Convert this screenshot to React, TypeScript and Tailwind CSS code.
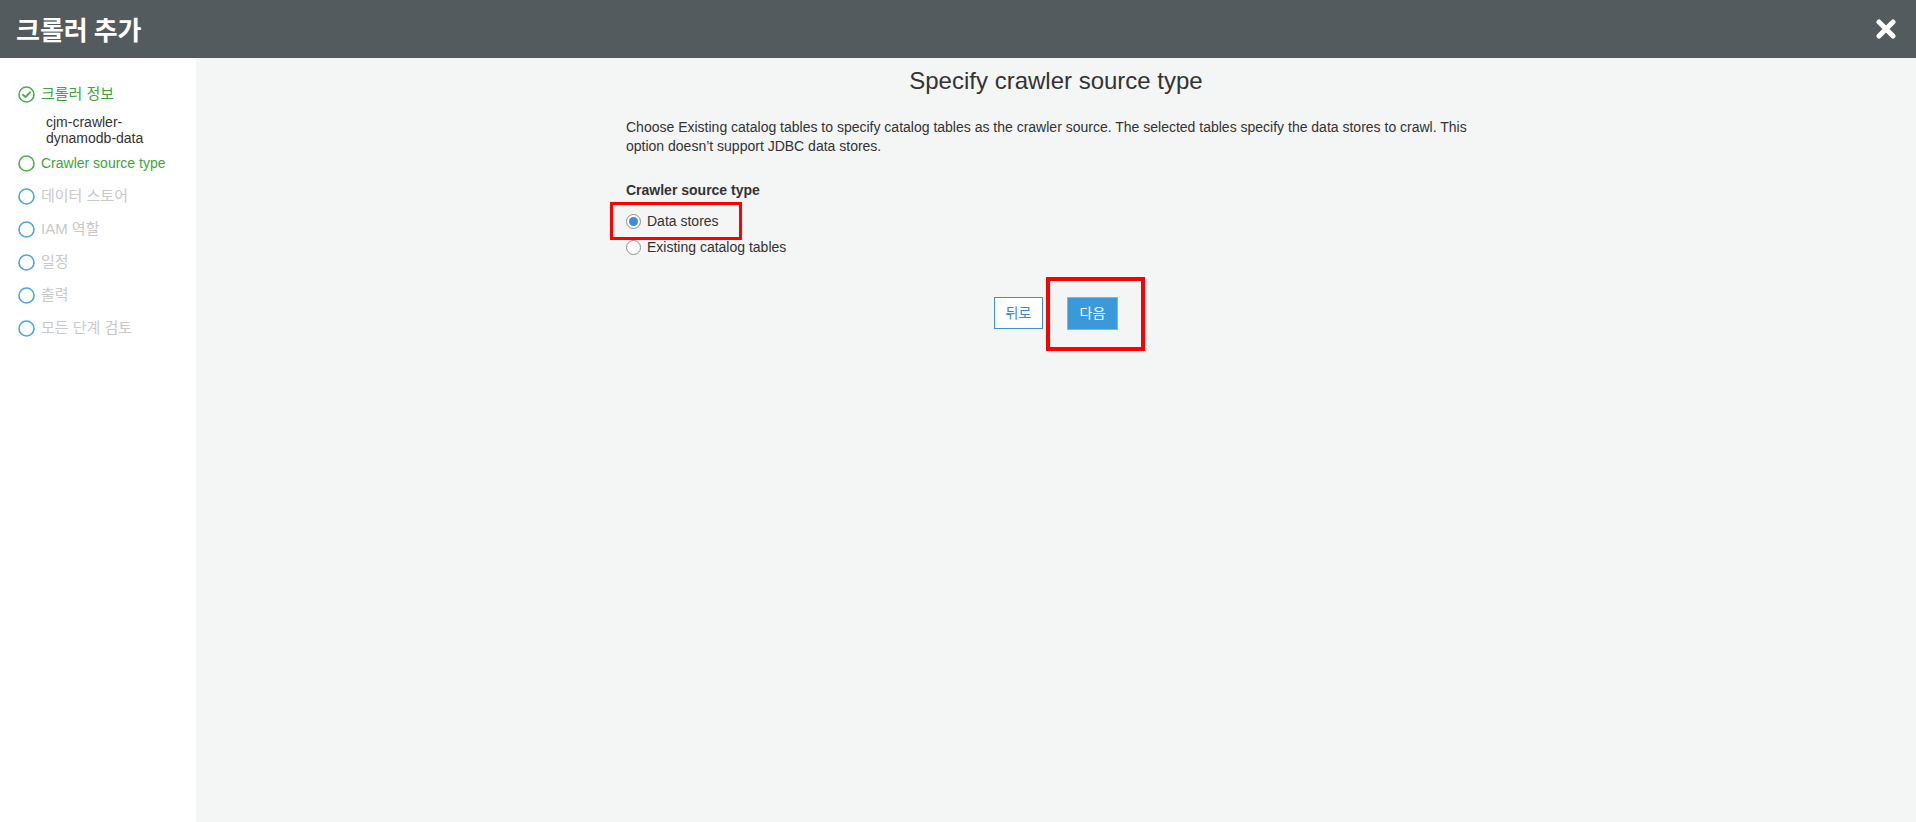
import React from "react";

const FONT = { fontFamily: '"Liberation Sans", Arial, "Noto Sans CJK KR", sans-serif' };

function CheckCircle() {
  return (
    <svg width="17" height="17" viewBox="0 0 17 17" className="shrink-0">
      <circle cx="8.5" cy="8.5" r="7.5" fill="none" stroke="#4cae4c" strokeWidth="1.6" />
      <path d="M5 8.7 L7.5 11.1 L12 6.4" fill="none" stroke="#4cae4c" strokeWidth="2" strokeLinecap="round" strokeLinejoin="round" />
    </svg>
  );
}

function Circle({ color }: { color: string }) {
  return (
    <svg width="17" height="17" viewBox="0 0 17 17" className="shrink-0">
      <circle cx="8.5" cy="8.5" r="7.5" fill="none" stroke={color} strokeWidth="1.6" />
    </svg>
  );
}

function Radio({ checked }: { checked?: boolean }) {
  return (
    <span className="w-[15px] h-[15px] rounded-full border border-[#8e8e8e] bg-white flex items-center justify-center shrink-0">
      {checked && <span className="w-[9px] h-[9px] rounded-full bg-[#3b8ede]" />}
    </span>
  );
}

export default function App() {
  const disabled = ["데이터 스토어", "IAM 역할", "일정", "출력", "모든 단계 검토"];
  return (
    <div className="w-[1916px] h-[822px] flex flex-col overflow-hidden" style={FONT}>
      <header className="h-[58px] bg-[#545b5e] flex items-center justify-between pl-4 pr-5 shrink-0">
        <h1 className="text-white text-[26px] font-bold leading-none" style={{ fontFamily: '"Noto Sans CJK KR", "Liberation Sans", sans-serif' }}>
          크롤러 추가
        </h1>
        <svg width="20" height="20" viewBox="0 0 20 20">
          <path d="M3 3 L17 17 M17 3 L3 17" stroke="white" strokeWidth="5" strokeLinecap="round" />
        </svg>
      </header>
      <div className="flex flex-1 min-h-0">
        <aside className="w-[196px] bg-white pt-5 pl-[18px] text-[14px] shrink-0">
          <div className="h-[32px] flex items-center gap-[6px] text-[#3fa33f]">
            <CheckCircle />
            <span className="text-[15px]">크롤러 정보</span>
          </div>
          <div className="mt-1 pl-[28px] text-[#333] leading-[16px]">
            <div>cjm-crawler-</div>
            <div>dynamodb-data</div>
          </div>
          <div className="mt-px h-[33px] flex items-center gap-[6px] text-[#3fa33f]">
            <Circle color="#4cae4c" />
            <span>Crawler source type</span>
          </div>
          {disabled.map((t) => (
            <div key={t} className="h-[33px] flex items-center gap-[6px] text-[#c9c9c9]">
              <Circle color="#4aa6e0" />
              <span className="text-[15px]">{t}</span>
            </div>
          ))}
        </aside>
        <main className="flex-1 bg-[#f4f5f5] pt-2 flex flex-col items-center text-[#333]">
          <h2 className="text-[24px] leading-[30px] font-normal text-[#333]">Specify crawler source type</h2>
          <div className="w-[860px] mt-[22px] relative">
            <p className="text-[14px] leading-[19px]">
              Choose Existing catalog tables to specify catalog tables as the crawler source. The selected tables specify the data stores to crawl. This option doesn’t support JDBC data stores.
            </p>
            <div className="mt-[25px] text-[14px] leading-[19px] font-bold">Crawler source type</div>
            <div className="mt-[8px] relative">
              <div className="absolute left-[-16px] top-[-6px] w-[132px] h-[38px] border-[3px] border-[#ff0000]" />
              <label className="h-[26px] flex items-center gap-[6px] text-[14px]">
                <Radio checked />
                <span>Data stores</span>
              </label>
              <label className="h-[26px] flex items-center gap-[6px] text-[14px]">
                <Radio />
                <span>Existing catalog tables</span>
              </label>
            </div>
          </div>
          <div className="mt-[37px] flex items-start gap-[24px]">
            <button className="w-[49px] h-[32px] border border-[#3d8fd0] bg-white text-[#3a87c8] text-[14px]">뒤로</button>
            <div className="relative">
              <div className="absolute left-[-21px] top-[-20px] w-[99px] h-[74px] border-[4px] border-[#ff0000]" />
              <button className="w-[51px] h-[33px] border border-[#7fb2ee] bg-[#3a9ad9] text-white text-[14px]">다음</button>
            </div>
          </div>
        </main>
      </div>
    </div>
  );
}
